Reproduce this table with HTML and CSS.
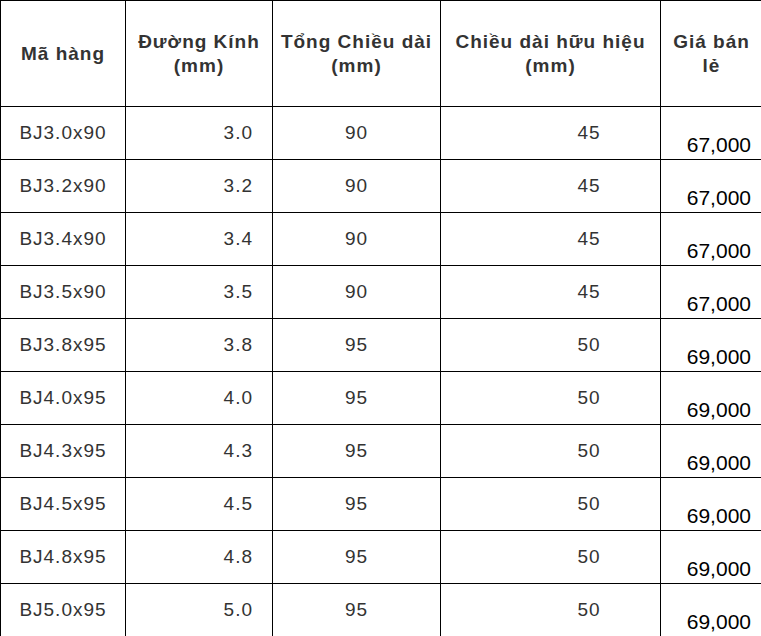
FILE: index.html
```html
<!DOCTYPE html>
<html lang="vi">
<head>
<meta charset="utf-8">
<title>Bảng giá</title>
<link rel="stylesheet" href="styles.css">
</head>
<body>
<table class="price-table">
  <colgroup>
    <col class="c1"><col class="c2"><col class="c3"><col class="c4"><col class="c5">
  </colgroup>
  <thead>
    <tr>
      <th>Mã hàng</th>
      <th>Đường Kính (mm)</th>
      <th>Tổng Chiều dài (mm)</th>
      <th>Chiều dài hữu hiệu (mm)</th>
      <th class="last">Giá bán lẻ</th>
    </tr>
  </thead>
  <tbody>
    <tr><td class="code">BJ3.0x90</td><td class="dia">3.0</td><td class="len">90</td><td class="eff">45</td><td class="price">67,000</td></tr>
    <tr><td class="code">BJ3.2x90</td><td class="dia">3.2</td><td class="len">90</td><td class="eff">45</td><td class="price">67,000</td></tr>
    <tr><td class="code">BJ3.4x90</td><td class="dia">3.4</td><td class="len">90</td><td class="eff">45</td><td class="price">67,000</td></tr>
    <tr><td class="code">BJ3.5x90</td><td class="dia">3.5</td><td class="len">90</td><td class="eff">45</td><td class="price">67,000</td></tr>
    <tr><td class="code">BJ3.8x95</td><td class="dia">3.8</td><td class="len">95</td><td class="eff">50</td><td class="price">69,000</td></tr>
    <tr><td class="code">BJ4.0x95</td><td class="dia">4.0</td><td class="len">95</td><td class="eff">50</td><td class="price">69,000</td></tr>
    <tr><td class="code">BJ4.3x95</td><td class="dia">4.3</td><td class="len">95</td><td class="eff">50</td><td class="price">69,000</td></tr>
    <tr><td class="code">BJ4.5x95</td><td class="dia">4.5</td><td class="len">95</td><td class="eff">50</td><td class="price">69,000</td></tr>
    <tr><td class="code">BJ4.8x95</td><td class="dia">4.8</td><td class="len">95</td><td class="eff">50</td><td class="price">69,000</td></tr>
    <tr><td class="code">BJ5.0x95</td><td class="dia">5.0</td><td class="len">95</td><td class="eff">50</td><td class="price">69,000</td></tr>
  </tbody>
</table>
</body>
</html>
```
FILE: styles.css
```css
html, body {
  margin: 0;
  padding: 0;
  background: #fff;
  overflow: hidden;
}
.price-table {
  border-collapse: collapse;
  table-layout: fixed;
  width: 762px;
  font-family: "Liberation Sans", Arial, sans-serif;
  color: #333;
}
.c1 { width: 125px; }
.c2 { width: 147px; }
.c3 { width: 168px; }
.c4 { width: 220px; }
.c5 { width: 102px; }
.price-table th,
.price-table td {
  border: 1px solid #000;
  padding: 0;
}
.price-table th {
  height: 105px;
  font-size: 19px;
  font-weight: bold;
  letter-spacing: 1px;
  line-height: 24px;
  text-align: center;
  vertical-align: middle;
  padding: 0 4px;
}
.price-table tbody tr {
  height: 53px;
}
.price-table td {
  font-size: 19px;
  letter-spacing: 1px;
  line-height: 22px;
  vertical-align: middle;
}
.price-table td.code { text-align: center; }
.price-table td.dia { text-align: right; padding-right: 19px; }
.price-table td.len { text-align: center; }
.price-table td.eff { text-align: center; padding-left: 77px; }
.price-table td.price {
  font-size: 21px;
  letter-spacing: 0;
  color: #000;
  text-align: right;
  vertical-align: bottom;
  padding-right: 11px;
  padding-bottom: 2px;
  line-height: 24px;
}
```
